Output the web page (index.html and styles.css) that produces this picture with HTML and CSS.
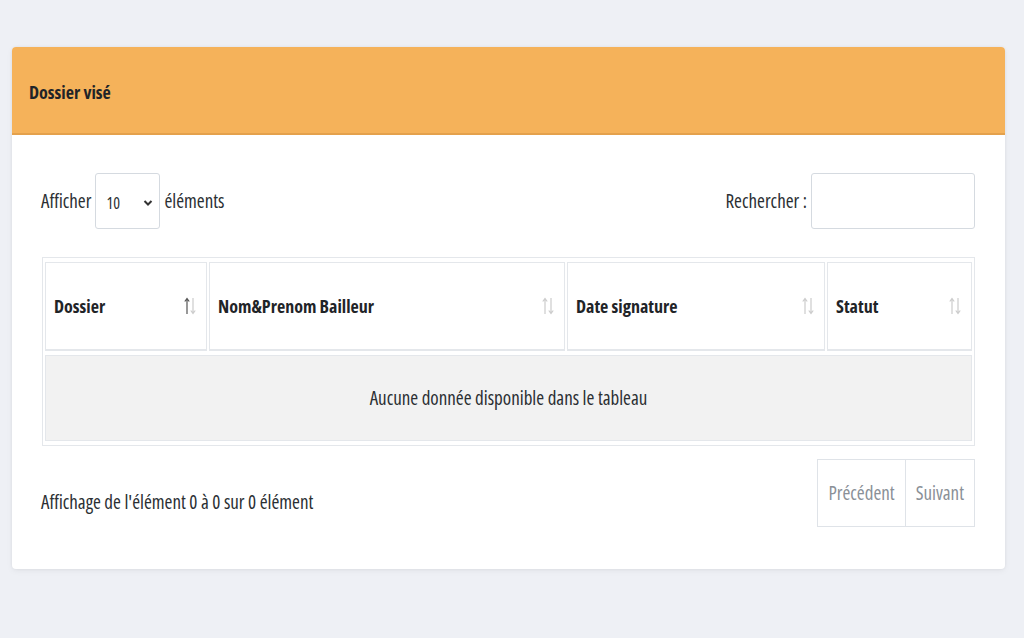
FILE: index.html
```html
<!DOCTYPE html>
<html lang="fr">
<head>
<meta charset="utf-8">
<title>Dossier visé</title>
<link rel="stylesheet" href="styles.css">
</head>
<body>
<div class="card">
  <div class="card-header"><h3 class="card-title">Dossier visé</h3></div>
  <div class="card-body">
    <div class="toolbar">
      <div class="length">
        <span>Afficher</span>
        <div class="select"><span>10</span>
          <svg width="10" height="8" viewBox="0 0 10 8"><path d="M1.5 2 L5 5.5 L8.5 2" fill="none" stroke="#333" stroke-width="2"/></svg>
        </div>
        <span>éléments</span>
      </div>
      <div class="search">
        <span>Rechercher :</span>
        <div class="input"></div>
      </div>
    </div>
    <table class="dt">
      <colgroup><col style="width:162px"><col style="width:356px"><col style="width:258px"><col style="width:145px"></colgroup>
      <thead>
        <tr>
          <th><div class="th"><span>Dossier</span><svg class="sort" width="12" height="20" viewBox="0 0 12 20"><path d="M3 18 V3 M0.8 5.5 L3 2.5 L5.2 5.5" fill="none" stroke="#555" stroke-width="1.2"/><path d="M9 2 V17 M6.8 14.5 L9 17.5 L11.2 14.5" fill="none" stroke="#ccc" stroke-width="1.2"/></svg></div></th>
          <th><div class="th"><span>Nom&amp;Prenom Bailleur</span><svg class="sort" width="12" height="20" viewBox="0 0 12 20"><path d="M3 18 V3 M0.8 5.5 L3 2.5 L5.2 5.5" fill="none" stroke="#ccc" stroke-width="1.2"/><path d="M9 2 V17 M6.8 14.5 L9 17.5 L11.2 14.5" fill="none" stroke="#ccc" stroke-width="1.2"/></svg></div></th>
          <th><div class="th"><span>Date signature</span><svg class="sort" width="12" height="20" viewBox="0 0 12 20"><path d="M3 18 V3 M0.8 5.5 L3 2.5 L5.2 5.5" fill="none" stroke="#ccc" stroke-width="1.2"/><path d="M9 2 V17 M6.8 14.5 L9 17.5 L11.2 14.5" fill="none" stroke="#ccc" stroke-width="1.2"/></svg></div></th>
          <th><div class="th"><span>Statut</span><svg class="sort" width="12" height="20" viewBox="0 0 12 20"><path d="M3 18 V3 M0.8 5.5 L3 2.5 L5.2 5.5" fill="none" stroke="#ccc" stroke-width="1.2"/><path d="M9 2 V17 M6.8 14.5 L9 17.5 L11.2 14.5" fill="none" stroke="#ccc" stroke-width="1.2"/></svg></div></th>
        </tr>
      </thead>
      <tbody>
        <tr><td colspan="4" class="empty">Aucune donnée disponible dans le tableau</td></tr>
      </tbody>
    </table>
    <div class="footer">
      <div class="info">Affichage de l'élément 0 à 0 sur 0 élément</div>
      <div class="pager">
        <span class="btn">Précédent</span>
        <span class="btn">Suivant</span>
      </div>
    </div>
  </div>
</div>
</body>
</html>
```
FILE: styles.css
```css
html, body {
  margin: 0;
  padding: 0;
}
body {
  background: #eef0f5;
  font-family: "Open Sans", "Liberation Sans", sans-serif;
  font-stretch: 75%;
  font-size: 19px;
  color: #2b2f33;
  padding: 47px 19px 0 12px;
  height: 638px;
  box-sizing: border-box;
}
.card {
  width: 993px;
  background: #fff;
  border-radius: 4px;
  box-shadow: 0 0 3px rgba(0,0,0,0.06), 0 2px 6px rgba(0,0,0,0.05);
  overflow: hidden;
}
.card-header {
  height: 88px;
  box-sizing: border-box;
  background: #f5b25a;
  border-bottom: 2px solid #e4a14c;
  display: flex;
  align-items: center;
  padding: 4px 17px 0;
}
.card-title {
  margin: 0;
  font-size: 18px;
  font-weight: 700;
  color: #1f2428;
}
.card-body {
  padding: 38px 30px 42px 30px;
}
.toolbar {
  display: flex;
  justify-content: space-between;
  align-items: center;
  height: 56px;
  margin-left: -1px;
}
.length, .search {
  display: flex;
  align-items: center;
  gap: 4px;
}
.select {
  width: 65px;
  height: 56px;
  box-sizing: border-box;
  border: 1px solid #d5dae0;
  border-radius: 3px;
  display: flex;
  align-items: center;
  justify-content: space-between;
  padding: 4px 6px 0 10px;
  font-size: 16px;
}
.input {
  width: 164px;
  height: 56px;
  box-sizing: border-box;
  border: 1px solid #d5dae0;
  border-radius: 3px;
}
.dt {
  margin-top: 28px;
  width: 933px;
  table-layout: fixed;
  border-collapse: separate;
  border-spacing: 2px 4px;
  border: 1px solid #e4e7eb;
}
.dt th {
  border: 1px solid #e4e7eb;
  border-bottom-width: 2px;
  height: 86px;
  padding: 0 10px 0 8px;
  text-align: left;
  font-size: 18px;
  font-weight: 700;
  color: #1f2428;
}
.th {
  display: flex;
  align-items: center;
  justify-content: space-between;
}
.sort {
  flex: none;
}
.dt td.empty {
  background: #f2f2f2;
  border: 1px solid #e4e7eb;
  height: 82px;
  text-align: center;
  color: #2b2f33;
}
.footer {
  display: flex;
  justify-content: space-between;
  align-items: center;
  margin-top: 13px;
}
.info {
  margin-left: -1px;
  padding-top: 18px;
}
.pager {
  display: flex;
  border: 1px solid #dfe3e8;
  height: 68px;
  box-sizing: border-box;
}
.btn {
  display: flex;
  align-items: center;
  padding: 0 10px;
  color: #8a9097;
}
.btn + .btn {
  border-left: 1px solid #dfe3e8;
}
```
